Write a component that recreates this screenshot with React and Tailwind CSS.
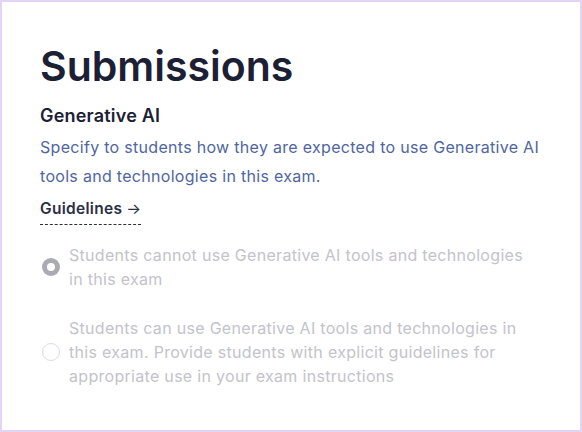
export default function App() {
  return (
    <div className="w-[582px] h-[432px] bg-white border-2 border-[#e2d5f7] box-border overflow-hidden" style={{ fontFamily: "Inter, 'Noto Sans', sans-serif" }}>
      <div className="pl-[38px] pr-[30px] pt-[40px]">
        <h1 className="text-[41px] leading-[48px] font-semibold text-[#1c2035] tracking-[0px]">Submissions</h1>
        <h2 className="mt-[14px] text-[18px] leading-[24px] font-semibold text-[#1c2035] tracking-[0.2px]">Generative AI</h2>
        <p className="mt-[5px] text-[16px] leading-[29px] text-[#5066a0] tracking-[0.3px]">
          Specify to students how they are expected to use Generative AI tools and technologies in this exam.
        </p>
        <div className="mt-[8px] inline-flex items-center gap-[4px] text-[15.5px] leading-[20px] font-semibold text-[#2b2f45] tracking-[0.3px] border-b border-dashed border-[#2b2f45] pb-[5px]">
          Guidelines <span className="font-normal">→</span>
        </div>
        <div className="mt-[18px] flex flex-col gap-[25px]">
          <div className="flex items-center gap-[9px]">
            <div className="w-[18px] h-[18px] rounded-full bg-[#a9aab2] flex items-center justify-center shrink-0 ml-[2px]">
              <div className="w-[8px] h-[8px] rounded-full bg-white" />
            </div>
            <div className="w-[462px] text-[16px] leading-[24px] text-[#c3c3ca] tracking-[0.3px]">
              Students cannot use Generative AI tools and technologies in this exam
            </div>
          </div>
          <div className="flex items-center gap-[9px]">
            <div className="w-[18px] h-[18px] rounded-full border border-[#dcdbea] shrink-0 ml-[2px]" />
            <div className="w-[462px] text-[16px] leading-[24px] text-[#c3c3ca] tracking-[0.3px]">
              Students can use Generative AI tools and technologies in this exam. Provide students with explicit guidelines for appropriate use in your exam instructions
            </div>
          </div>
        </div>
      </div>
    </div>
  );
}
